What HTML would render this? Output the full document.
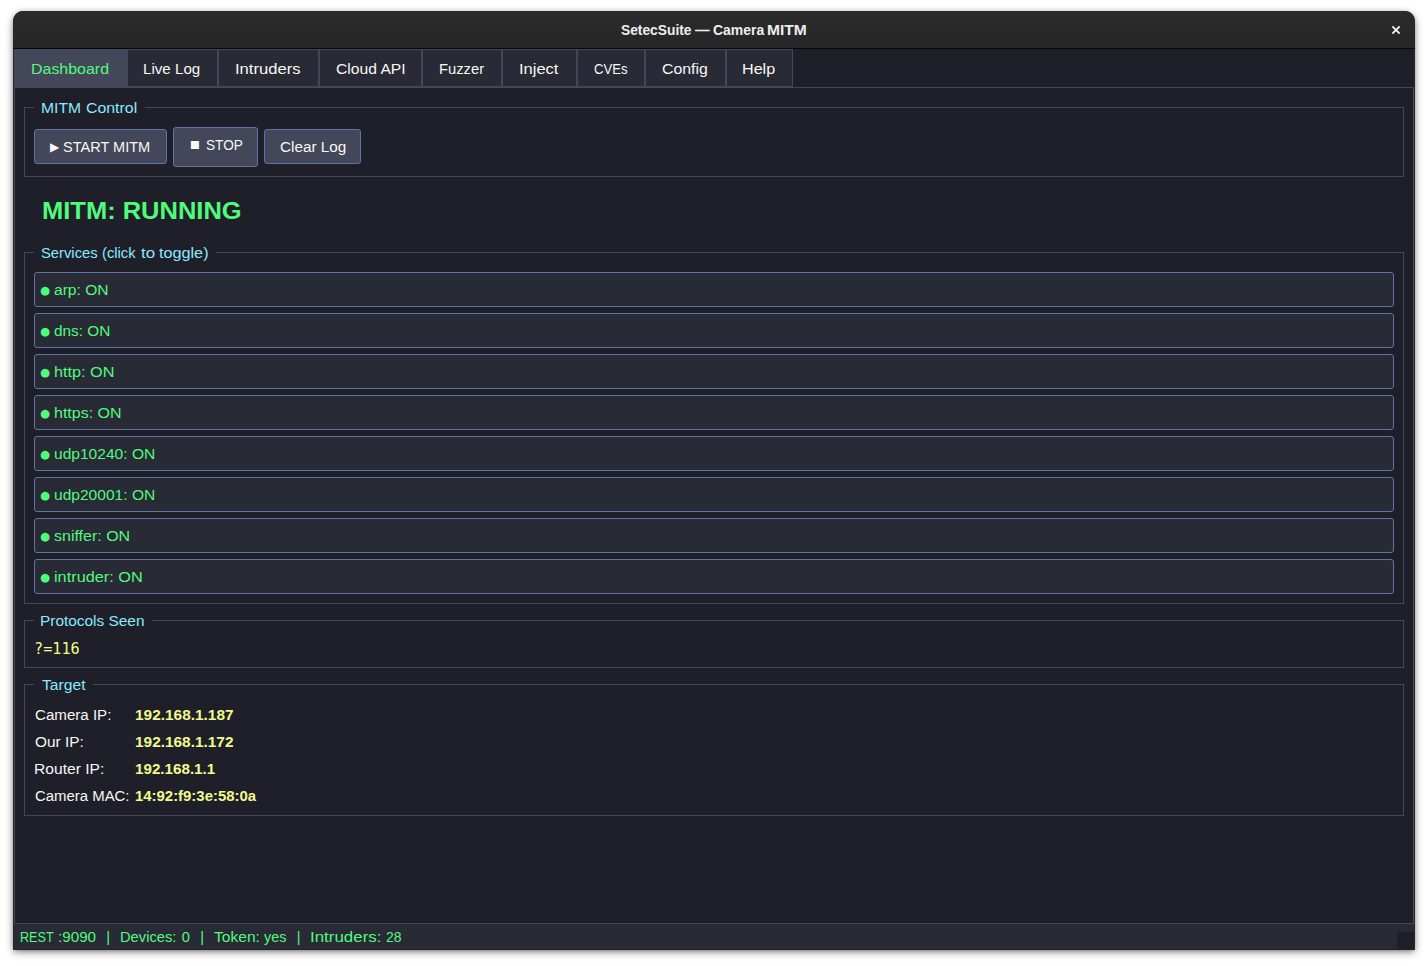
<!DOCTYPE html>
<html lang="en">
<head>
<meta charset="utf-8">
<title>SetecSuite — Camera MITM</title>
<style>
*{box-sizing:border-box;margin:0;padding:0}
html,body{width:1428px;height:966px;background:#fff;overflow:hidden}
body{position:relative;font-family:"Liberation Sans","DejaVu Sans",sans-serif;font-size:14.667px;color:#f8f8f2}
.win div,.win svg{position:absolute}
.t{white-space:pre;line-height:20px;height:20px;transform-origin:0 0}
.win{position:absolute;left:13px;top:11px;width:1402px;height:938px;background:#1e1f29;border-radius:10px 10px 0 0;
 box-shadow:0 3px 8px rgba(0,0,0,.40),0 0 4px rgba(0,0,0,.12),0 4px 5px -2px rgba(0,0,0,.22);overflow:hidden}
.titlebar{left:0;top:0;width:1402px;height:38px;background:linear-gradient(#2b2b2b,#262626);border-bottom:1px solid #060606}
.edge{top:38px;width:1px;height:900px;background:#29292b}
.title{font-weight:700;color:#eee}
.close{left:1374px;top:10px;width:18px;height:18px}
.tab{top:38px;height:38px;background:#282a36;border:1px solid #44475a}
.tab.sel{background:#44475a}
.pane{left:1px;top:76px;width:1400px;height:837px;border:1px solid #44475a}
.status{left:1px;top:913px;width:1400px;height:25px;background:#282a36}
.grip{left:1384px;top:921px;width:17px;height:17px;background:#1e1f29}
.gb{left:11px;width:1380px;border:1px solid #44475a}
.gap{background:#1e1f29;left:21px;height:3px}
.c{color:#8be9fd}
.btn{background:#44475a;border:1px solid #6272a4;border-radius:3px}
.svc{left:21px;width:1360px;height:35px;background:#282a36;border:1px solid #6272a4;border-radius:3px}
.g{color:#50fa7b}
.y{color:#f1fa8c}
.b{font-weight:700}
.m{font-family:"DejaVu Sans Mono","Liberation Mono",monospace}
.sym{font-family:"DejaVu Sans","Liberation Sans",sans-serif}
</style>
</head>
<body>
<div class="win">
 <div class="titlebar"></div>
 <div class="edge" style="left:0"></div><div class="edge" style="left:1401px"></div>
 <div class="t title" style="left:607.83px;top:8.94px;transform:scaleX(0.9446);font-size:14.6px">SetecSuite</div>
 <div class="t title" style="left:681.91px;top:8.94px;font-size:14.6px">—</div>
 <div class="t title" style="left:699.95px;top:8.94px;transform:scaleX(0.9557);font-size:14.6px">Camera</div>
 <div class="t title" style="left:754.43px;top:8.94px;transform:scaleX(1.0656);font-size:14.6px">MITM</div>
 <svg class="close" viewBox="0 0 18 18"><path d="M6.05 6.05 L11.95 11.95 M11.95 6.05 L6.05 11.95" stroke="#f2f2f2" stroke-width="1.9" stroke-linecap="square" fill="none"/></svg>
 <div class="tab sel" style="left:1px;width:113px"></div>
 <div class="t g" style="left:18.17px;top:47.92px;transform:scaleX(1.0883)">Dashboard</div>
 <div class="tab" style="left:114px;width:91px"></div>
 <div class="t" style="left:130.24px;top:47.92px;transform:scaleX(1.0326)">Live Log</div>
 <div class="tab" style="left:205px;width:101px"></div>
 <div class="t" style="left:222.46px;top:47.92px;transform:scaleX(1.1320)">Intruders</div>
 <div class="tab" style="left:306px;width:103px"></div>
 <div class="t" style="left:323.05px;top:47.92px;transform:scaleX(1.0679)">Cloud API</div>
 <div class="tab" style="left:409px;width:80px"></div>
 <div class="t" style="left:425.67px;top:47.92px;transform:scaleX(1.0067)">Fuzzer</div>
 <div class="tab" style="left:489px;width:75px"></div>
 <div class="t" style="left:505.97px;top:47.92px;transform:scaleX(1.1259)">Inject</div>
 <div class="tab" style="left:564px;width:68px"></div>
 <div class="t" style="left:581.17px;top:47.92px;transform:scaleX(0.8950)">CVEs</div>
 <div class="tab" style="left:632px;width:81px"></div>
 <div class="t" style="left:649.44px;top:47.92px;transform:scaleX(1.0811)">Config</div>
 <div class="tab" style="left:713px;width:67px"></div>
 <div class="t" style="left:729.45px;top:47.92px;transform:scaleX(1.1001)">Help</div>
 <div class="pane"></div>
 <div class="gb" style="top:96px;height:70px"></div>
 <div class="gap" style="top:95px;width:111px"></div>
 <div class="t c" style="left:28.25px;top:86.62px;transform:scaleX(1.0694)">MITM</div>
 <div class="t c" style="left:73.44px;top:86.62px;transform:scaleX(1.0829)">Control</div>
 <div class="btn" style="left:21px;top:118px;width:133px;height:35px"></div>
 <div class="btn" style="left:160px;top:116px;width:85px;height:40px"></div>
 <div class="btn" style="left:251px;top:118px;width:97px;height:35px"></div>
 <div class="t sym" style="left:37.08px;top:126.15px;font-size:12.0px">▶</div>
 <div class="t" style="left:49.82px;top:126.12px;transform:scaleX(0.9913)">START MITM</div>
 <div class="t sym" style="left:177.00px;top:123.00px;font-size:10.4px">■</div>
 <div class="t" style="left:192.57px;top:124.32px;transform:scaleX(0.9276)">STOP</div>
 <div class="t" style="left:266.67px;top:125.92px;transform:scaleX(1.0434)">Clear Log</div>
 <div class="t g b" style="left:29.35px;top:184.66px;transform:scaleX(1.0996);font-size:23.2px;line-height:30px;height:30px">MITM: RUNNING</div>
 <div class="gb" style="top:241px;height:352px"></div>
 <div class="gap" style="top:240px;width:182px"></div>
 <div class="t c" style="left:28.01px;top:231.82px;transform:scaleX(1.0073)">Services</div>
 <div class="t c" style="left:89.28px;top:231.82px;transform:scaleX(1.0078)">(click</div>
 <div class="t c" style="left:127.64px;top:231.82px;transform:scaleX(1.1511)">to</div>
 <div class="t c" style="left:146.15px;top:231.82px;transform:scaleX(1.1052)">toggle)</div>
 <div class="svc" style="top:261px"></div>
 <div class="t sym g" style="left:27.37px;top:269.31px;font-size:11.4px">●</div>
 <div class="t g" style="left:40.95px;top:268.92px;transform:scaleX(1.0640)">arp: ON</div>
 <div class="svc" style="top:302px"></div>
 <div class="t sym g" style="left:27.37px;top:310.31px;font-size:11.4px">●</div>
 <div class="t g" style="left:41.00px;top:309.92px;transform:scaleX(1.0465)">dns: ON</div>
 <div class="svc" style="top:343px"></div>
 <div class="t sym g" style="left:27.37px;top:351.31px;font-size:11.4px">●</div>
 <div class="t g" style="left:40.76px;top:350.92px;transform:scaleX(1.1084)">http: ON</div>
 <div class="svc" style="top:384px"></div>
 <div class="t sym g" style="left:27.37px;top:392.31px;font-size:11.4px">●</div>
 <div class="t g" style="left:40.78px;top:391.92px;transform:scaleX(1.0917)">https: ON</div>
 <div class="svc" style="top:425px"></div>
 <div class="t sym g" style="left:27.37px;top:433.31px;font-size:11.4px">●</div>
 <div class="t g" style="left:41.04px;top:432.92px;transform:scaleX(1.0619)">udp10240: ON</div>
 <div class="svc" style="top:466px"></div>
 <div class="t sym g" style="left:27.37px;top:474.31px;font-size:11.4px">●</div>
 <div class="t g" style="left:41.04px;top:473.92px;transform:scaleX(1.0619)">udp20001: ON</div>
 <div class="svc" style="top:507px"></div>
 <div class="t sym g" style="left:27.37px;top:515.31px;font-size:11.4px">●</div>
 <div class="t g" style="left:41.05px;top:514.92px;transform:scaleX(1.0916)">sniffer: ON</div>
 <div class="svc" style="top:548px"></div>
 <div class="t sym g" style="left:27.37px;top:556.31px;font-size:11.4px">●</div>
 <div class="t g" style="left:40.79px;top:555.92px;transform:scaleX(1.1126)">intruder: ON</div>
 <div class="gb" style="top:609px;height:48px"></div>
 <div class="gap" style="top:608px;width:118px"></div>
 <div class="t c" style="left:27.21px;top:599.62px;transform:scaleX(1.0508)">Protocols Seen</div>
 <div class="t y m" style="left:20.77px;top:628.26px;transform:scaleX(0.9149);font-size:16.6px">?=116</div>
 <div class="gb" style="top:673px;height:132px"></div>
 <div class="gap" style="top:672px;width:59px"></div>
 <div class="t c" style="left:28.66px;top:663.62px;transform:scaleX(1.0686)">Target</div>
 <div class="t" style="left:21.68px;top:693.92px;transform:scaleX(1.0304)">Camera IP:</div>
 <div class="t y b" style="left:122.18px;top:693.92px;transform:scaleX(1.0515)">192.168.1.187</div>
 <div class="t" style="left:21.72px;top:720.92px;transform:scaleX(1.0498)">Our IP:</div>
 <div class="t y b" style="left:122.18px;top:720.92px;transform:scaleX(1.0508)">192.168.1.172</div>
 <div class="t" style="left:21.10px;top:747.92px;transform:scaleX(1.0647)">Router IP:</div>
 <div class="t y b" style="left:122.19px;top:747.92px;transform:scaleX(1.0361)">192.168.1.1</div>
 <div class="t" style="left:21.69px;top:774.92px;transform:scaleX(1.0181)">Camera MAC:</div>
 <div class="t y b" style="left:122.21px;top:774.92px;transform:scaleX(1.0176)">14:92:f9:3e:58:0a</div>
 <div class="status"></div>
 <div class="grip"></div>
 <div class="t g" style="left:7.15px;top:915.92px;transform:scaleX(0.8604)">REST</div>
 <div class="t g" style="left:44.87px;top:915.92px;transform:scaleX(1.0374)">:9090</div>
 <div class="t g" style="left:107.37px;top:915.92px;transform:scaleX(1.0036)">Devices:</div>
 <div class="t g" style="left:168.77px;top:915.92px">0</div>
 <div class="t g" style="left:201.26px;top:915.92px;transform:scaleX(1.0629)">Token:</div>
 <div class="t g" style="left:251.06px;top:915.92px;transform:scaleX(0.9815)">yes</div>
 <div class="t g" style="left:297.34px;top:915.92px;transform:scaleX(1.1534)">Intruders:</div>
 <div class="t g" style="left:372.55px;top:915.92px;transform:scaleX(0.9561)">28</div>
 <div class="t g" style="left:93.20px;top:915.92px">|</div>
 <div class="t g" style="left:187.30px;top:915.92px">|</div>
 <div class="t g" style="left:283.80px;top:915.92px">|</div>
</div>
<div style="position:absolute;left:13px;top:949px;width:1402px;height:1px;background:rgba(28,28,30,.95)"></div>
</body>
</html>
